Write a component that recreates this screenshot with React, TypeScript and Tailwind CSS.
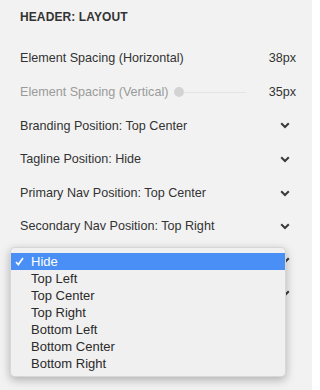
import React from "react";

const rows = [
  { label: "Branding Position: Top Center" },
  { label: "Tagline Position: Hide" },
  { label: "Primary Nav Position: Top Center" },
  { label: "Secondary Nav Position: Top Right" },
  // these two sit under the open menu, only their chevrons show
  { label: "" },
  { label: "" },
];

const options = [
  "Hide",
  "Top Left",
  "Top Center",
  "Top Right",
  "Bottom Left",
  "Bottom Center",
  "Bottom Right",
];

const Chevron: React.FC = () => (
  <svg width="10" height="7" viewBox="0 0 10 7" className="text-[#3a3a3a]">
    <polyline
      points="1.2,1.2 5,5 8.8,1.2"
      fill="none"
      stroke="currentColor"
      strokeWidth="2"
    />
  </svg>
);

const App: React.FC = () => {
  return (
    <div className="relative w-[312px] h-[390px] overflow-hidden bg-[#f2f2f2] font-['Liberation_Sans',Arial,sans-serif] text-[#333]">
      {/* Title */}
      <div className="h-[42px] pl-5 pt-[9px] text-[12px] leading-[16px] font-bold tracking-[0.1px] text-[#333]">
        HEADER: LAYOUT
      </div>

      {/* Spacing sliders */}
      <div className="flex h-[33.6px] items-center pl-5 pr-4 text-[12.6px]">
        <span>Element Spacing (Horizontal)</span>
        <span className="ml-auto">38px</span>
      </div>
      <div className="flex h-[33.6px] items-center pl-5 pr-4 text-[12.6px]">
        <span className="text-[#9a9a9a]">Element Spacing (Vertical)</span>
        <div className="ml-[6px] flex w-[72px] items-center">
          <div className="h-[10px] w-[10px] rounded-full bg-[#d3d3d3]" />
          <div className="h-px flex-1 bg-[#e4e4e4]" />
        </div>
        <span className="ml-auto">35px</span>
      </div>

      {/* Select rows */}
      {rows.map((row, i) => (
        <div
          key={i}
          className="flex h-[33.6px] items-center pl-5 pr-[22px] text-[12.6px]"
        >
          <span>{row.label}</span>
          <span className="ml-auto">
            <Chevron />
          </span>
        </div>
      ))}

      {/* Open native-style menu */}
      <div className="absolute left-[10px] top-[247px] w-[276px] rounded-[5px] border border-black/10 bg-[#f0f0f0] pt-[5px] pb-[4px] shadow-[0_3px_10px_rgba(0,0,0,0.28)] text-[13px] leading-[17px] text-[#2a2a2a]">
        {options.map((opt, i) => (
          <div
            key={opt}
            className={`relative flex h-[17px] items-center pl-[20px] ${
              i === 0 ? "bg-[#4a8ff5] text-white" : ""
            }`}
          >
            {i === 0 && (
              <svg
                width="9"
                height="9"
                viewBox="0 0 9 9"
                className="absolute left-[4px] top-[4px]"
              >
                <path
                  d="M1 5 L3.3 7.6 L8 1"
                  fill="none"
                  stroke="white"
                  strokeWidth="1.7"
                />
              </svg>
            )}
            {opt}
          </div>
        ))}
      </div>
    </div>
  );
};

export default App;
